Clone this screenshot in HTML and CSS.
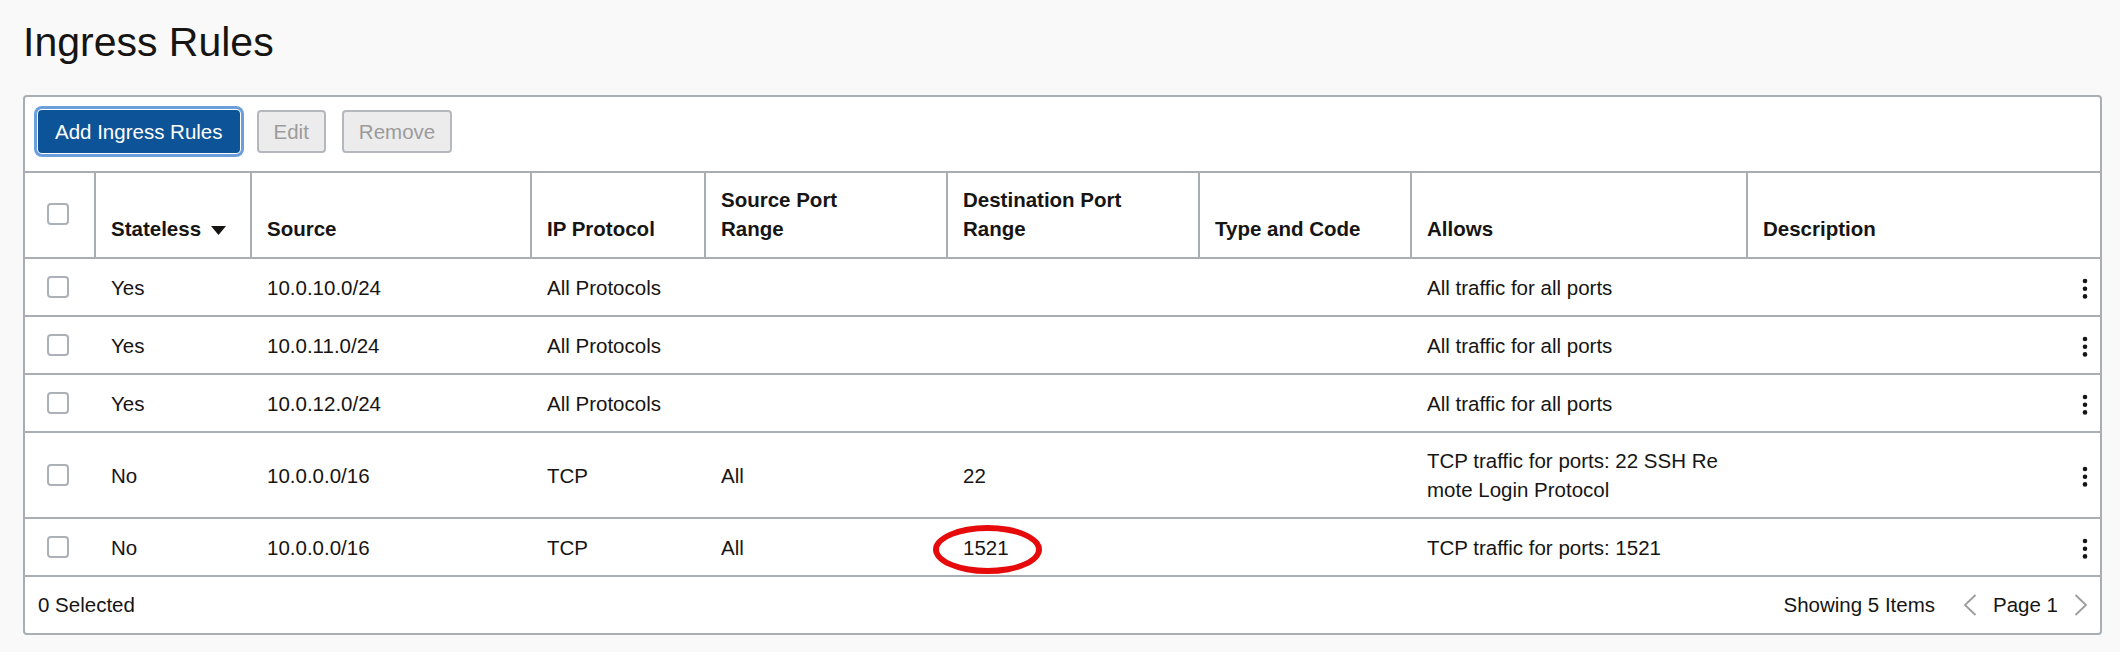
FILE: index.html
```html
<!DOCTYPE html>
<html lang="en">
<head>
<meta charset="utf-8">
<title>Ingress Rules</title>
<link rel="stylesheet" href="styles.css">
</head>
<body>
<main class="page">
  <h1 class="title">Ingress Rules</h1>
  <section class="panel">
    <div class="toolbar">
      <button class="btn btn-primary" type="button">Add Ingress Rules</button>
      <button class="btn btn-disabled" type="button" disabled>Edit</button>
      <button class="btn btn-disabled" type="button" disabled>Remove</button>
    </div>
    <table class="rules">
      <colgroup>
        <col class="w-check">
        <col class="w-stateless">
        <col class="w-source">
        <col class="w-proto">
        <col class="w-sport">
        <col class="w-dport">
        <col class="w-type">
        <col class="w-allows">
        <col class="w-desc">
      </colgroup>
      <thead>
        <tr>
          <th class="c-check"><span class="checkbox"></span></th>
          <th>Stateless<svg class="sort" width="15" height="9" viewBox="0 0 15 9"><path d="M0 0 H15 L7.5 9 Z" fill="#161513"/></svg></th>
          <th>Source</th>
          <th>IP Protocol</th>
          <th>Source Port<br>Range</th>
          <th>Destination Port<br>Range</th>
          <th>Type and Code</th>
          <th>Allows</th>
          <th class="last">Description</th>
        </tr>
      </thead>
      <tbody>
        <tr>
          <td class="c-check"><span class="checkbox"></span></td>
          <td>Yes</td>
          <td>10.0.10.0/24</td>
          <td>All Protocols</td>
          <td></td>
          <td></td>
          <td></td>
          <td class="allows">All traffic for all ports</td>
          <td class="c-menu"><svg class="kebab" width="6" height="22" viewBox="0 0 6 22"><circle cx="3" cy="3" r="2.3"/><circle cx="3" cy="10.7" r="2.3"/><circle cx="3" cy="18.4" r="2.3"/></svg></td>
        </tr>
        <tr>
          <td class="c-check"><span class="checkbox"></span></td>
          <td>Yes</td>
          <td>10.0.11.0/24</td>
          <td>All Protocols</td>
          <td></td>
          <td></td>
          <td></td>
          <td class="allows">All traffic for all ports</td>
          <td class="c-menu"><svg class="kebab" width="6" height="22" viewBox="0 0 6 22"><circle cx="3" cy="3" r="2.3"/><circle cx="3" cy="10.7" r="2.3"/><circle cx="3" cy="18.4" r="2.3"/></svg></td>
        </tr>
        <tr>
          <td class="c-check"><span class="checkbox"></span></td>
          <td>Yes</td>
          <td>10.0.12.0/24</td>
          <td>All Protocols</td>
          <td></td>
          <td></td>
          <td></td>
          <td class="allows">All traffic for all ports</td>
          <td class="c-menu"><svg class="kebab" width="6" height="22" viewBox="0 0 6 22"><circle cx="3" cy="3" r="2.3"/><circle cx="3" cy="10.7" r="2.3"/><circle cx="3" cy="18.4" r="2.3"/></svg></td>
        </tr>
        <tr>
          <td class="c-check"><span class="checkbox"></span></td>
          <td>No</td>
          <td>10.0.0.0/16</td>
          <td>TCP</td>
          <td>All</td>
          <td>22</td>
          <td></td>
          <td class="allows">TCP traffic for ports: 22 SSH Remote Login Protocol</td>
          <td class="c-menu"><svg class="kebab" width="6" height="22" viewBox="0 0 6 22"><circle cx="3" cy="3" r="2.3"/><circle cx="3" cy="10.7" r="2.3"/><circle cx="3" cy="18.4" r="2.3"/></svg></td>
        </tr>
        <tr>
          <td class="c-check"><span class="checkbox"></span></td>
          <td>No</td>
          <td>10.0.0.0/16</td>
          <td>TCP</td>
          <td>All</td>
          <td><span class="circled">1521<span class="ring"></span></span></td>
          <td></td>
          <td class="allows">TCP traffic for ports: 1521</td>
          <td class="c-menu"><svg class="kebab" width="6" height="22" viewBox="0 0 6 22"><circle cx="3" cy="3" r="2.3"/><circle cx="3" cy="10.7" r="2.3"/><circle cx="3" cy="18.4" r="2.3"/></svg></td>
        </tr>
      </tbody>
    </table>
    <div class="footer">
      <span class="selected">0 Selected</span>
      <div class="pager">
        <span class="count">Showing 5 Items</span>
        <svg class="chev" width="14" height="22" viewBox="0 0 14 22"><polyline points="12.5,1 2,11 12.5,21" fill="none" stroke="#9c9c9c" stroke-width="1.8"/></svg>
        <span class="page-no">Page 1</span>
        <svg class="chev" width="14" height="22" viewBox="0 0 14 22"><polyline points="1.5,1 12,11 1.5,21" fill="none" stroke="#9c9c9c" stroke-width="1.8"/></svg>
      </div>
    </div>
  </section>
</main>
</body>
</html>
```
FILE: styles.css
```css
* { box-sizing: border-box; }

html, body {
  margin: 0;
  padding: 0;
  background: #f9f9f9;
}

body {
  font-family: "Liberation Sans", Arial, Helvetica, sans-serif;
  color: #161513;
  font-size: 20.5px;
}

.page {
  padding: 18px 18px 0 23px;
}

.title {
  margin: 0;
  font-size: 41px;
  line-height: 48px;
  font-weight: normal;
  color: #161513;
}

.panel {
  margin-top: 29px;
  background: #fff;
  border: 2px solid #a9aeb5;
  border-radius: 4px;
}

.toolbar {
  height: 74px;
  display: flex;
  align-items: flex-start;
  gap: 16px;
  padding: 13px 13px 0;
}

.btn {
  height: 43px;
  padding: 0 15px;
  border-radius: 4px;
  font-family: inherit;
  font-size: 20.5px;
  line-height: 39px;
}

.btn-primary {
  background: #0c5497;
  border: 2px solid #0c5497;
  color: #fff;
  box-shadow: 0 0 0 1px #fff, 0 0 0 4px #6c9edb;
  margin-right: 1px;
}

.btn-disabled {
  background: #ececec;
  border: 2px solid #b4b8be;
  color: #9b9b9b;
}

.rules {
  width: 100%;
  table-layout: fixed;
  border-collapse: separate;
  border-spacing: 0;
}

.w-check { width: 71px; }
.w-stateless { width: 156px; }
.w-source { width: 280px; }
.w-proto { width: 174px; }
.w-sport { width: 242px; }
.w-dport { width: 252px; }
.w-type { width: 212px; }
.w-allows { width: 336px; }
.w-desc { width: 352px; }

.rules thead tr { height: 88px; }

.rules th {
  text-align: left;
  font-weight: bold;
  line-height: 29px;
  vertical-align: bottom;
  padding: 0 15px 14px;
  border-top: 2px solid #a9aeb5;
  border-bottom: 2px solid #a9aeb5;
  border-right: 2px solid #a9aeb5;
}

.rules th.last { border-right: 0; }

.rules th.c-check {
  vertical-align: middle;
  padding: 0 0 3px 22px;
}

.sort {
  margin-left: 10px;
  vertical-align: 1px;
}

.rules tbody tr { height: 58px; }

.rules td {
  padding: 13px 15px;
  line-height: 29px;
  vertical-align: middle;
  border-bottom: 2px solid #a9aeb5;
}

.rules td.c-check { padding-left: 22px; padding-right: 0; }

.checkbox {
  display: block;
  width: 22px;
  height: 22px;
  border: 2px solid #acb1b8;
  border-radius: 4px;
  background: #fff;
}

.allows { word-break: break-all; }

.rules td.c-menu {
  text-align: right;
  padding-right: 12px;
}

.kebab {
  display: inline-block;
  vertical-align: middle;
  fill: #161513;
}

.circled {
  position: relative;
  display: inline-block;
}

.ring {
  position: absolute;
  left: -30px;
  top: -8px;
  width: 109px;
  height: 49px;
  border: 6px solid #e60a0a;
  border-radius: 50%;
}

.footer {
  height: 56px;
  display: flex;
  align-items: center;
  justify-content: space-between;
  padding: 0 12px 0 13px;
}

.pager {
  display: flex;
  align-items: center;
}

.count { margin-right: 28px; }

.page-no { margin: 0 16px; }

.chev { display: block; }
```
